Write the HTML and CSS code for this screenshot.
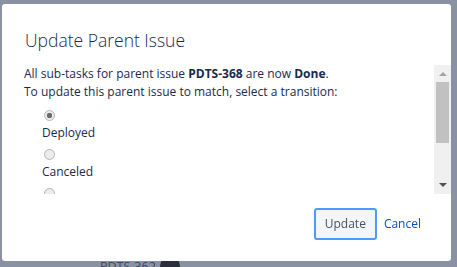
FILE: index.html
```html
<!doctype html>
<html>
  <head>
    <title>Update Parent Issue</title>
    <meta charset='utf-8'>
    <link rel="stylesheet" href="styles.css">
  </head>
  <body>
    <div class='bg-board'>
      <div class='bg-card'>
        <span class='bg-key'>PDTS-362</span>
        <span class='bg-avatar'></span>
      </div>
    </div>
    <div class='dlg-container'>
      <h2 class='dlg-title'>Update Parent Issue</h2>
      <div class='dlg-scroll'>
        <div class='dlg-body'>
          <p class='dlg-text'>All sub-tasks for parent issue <strong>PDTS-368</strong> are now <strong>Done</strong>.</p>
          <p class='dlg-text'>To update this parent issue to match, select a transition:</p>
          <div class='dlg-options'>
            <label class='dlg-option'>
              <input type='radio' name='transition' checked>
              <span>Deployed</span>
            </label>
            <label class='dlg-option'>
              <input type='radio' name='transition'>
              <span>Canceled</span>
            </label>
            <label class='dlg-option'>
              <input type='radio' name='transition'>
              <span>Done</span>
            </label>
          </div>
        </div>
        <div class='sb-bar'>
          <span class='sb-up'></span>
          <span class='sb-thumb'></span>
          <span class='sb-down'></span>
        </div>
      </div>
      <footer class='dlg-footer'>
        <button class='dlg-button'>Update</button>
        <a class='dlg-cancel' href='#'>Cancel</a>
      </footer>
    </div>
  </body>
</html>
```

FILE: styles.css
```css
html,
body {
  height: 100%;
}
body {
  margin: 0;
  padding: 0;
  background-color: #8991a3;
  font-family: 'Open Sans', sans-serif;
  color: #172b4d;
  overflow: hidden;
}
.bg-board {
  height: 100%;
  display: flex;
  align-items: flex-end;
}
.bg-card {
  margin-left: 100px;
  margin-bottom: -9px;
  display: flex;
  align-items: center;
  gap: 4px;
  color: #3d4962;
  font-size: 12.5px;
}
.bg-avatar {
  width: 20px;
  height: 20px;
  border-radius: 50%;
  background-color: #2b2f3a;
}
.dlg-container {
  position: fixed;
  top: 4px;
  left: 2px;
  width: 449px;
  height: 257px;
  background-color: #fff;
  border-radius: 3px;
  display: flex;
  flex-direction: column;
}
.dlg-title {
  margin: 0;
  padding: 24px 23px 0;
  height: 37px;
  font-size: 17.5px;
  font-weight: 300;
  line-height: 24px;
  color: #172b4d;
}
.dlg-scroll {
  height: 129px;
  display: flex;
}
.dlg-body {
  flex: 1;
  padding-left: 22px;
  overflow: hidden;
  font-size: 12px;
  line-height: 18px;
}
.dlg-text {
  margin: 0;
}
.dlg-options {
  padding-left: 18px;
  padding-top: 4px;
}
.dlg-option {
  display: flex;
  flex-direction: column;
  align-items: flex-start;
  margin-bottom: 2px;
}
.dlg-option input {
  -webkit-appearance: none;
  appearance: none;
  width: 11px;
  height: 11px;
  margin: 5px 0 2px 2px;
  border: 1px solid #b4b4b4;
  border-radius: 50%;
  background-color: #ececec;
}
.dlg-option input:checked {
  background: radial-gradient(circle, #6a6a6a 0 2.5px, #ececec 3px);
}
.dlg-option span {
  line-height: 19px;
}
.sb-bar {
  width: 17px;
  background-color: #f0f0f0;
  display: flex;
  flex-direction: column;
  align-items: center;
}
.sb-up,
.sb-down {
  width: 0;
  height: 0;
  border-left: 4px solid transparent;
  border-right: 4px solid transparent;
}
.sb-up {
  margin-top: 7px;
  border-bottom: 4px solid #a3a3a3;
}
.sb-thumb {
  width: 13px;
  height: 61px;
  margin-top: 6px;
  background-color: #c1c1c1;
}
.sb-down {
  margin-top: auto;
  margin-bottom: 7px;
  border-top: 4px solid #505050;
}
.dlg-footer {
  flex: 1;
  display: flex;
  align-items: center;
  justify-content: flex-end;
  padding: 0 30px 8px 0;
  gap: 7px;
}
.dlg-button {
  height: 32px;
  padding: 0 9px;
  border: 2px solid #4c9aff;
  border-radius: 3px;
  background-color: #f4f5f7;
  color: #42526e;
  font-family: inherit;
  font-size: 12px;
}
.dlg-cancel {
  color: #0052cc;
  text-decoration: none;
  font-size: 12px;
}
```
